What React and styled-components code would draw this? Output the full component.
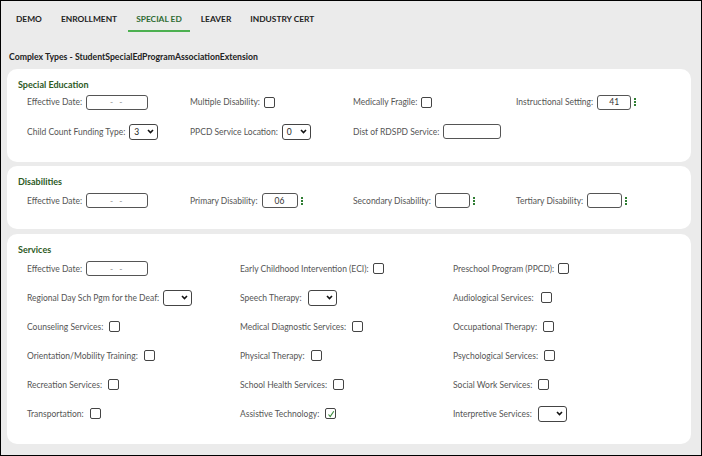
import React from "react";
import styled, { createGlobalStyle } from "styled-components";

const GlobalStyle = createGlobalStyle`
    body {
        margin: 0;
        font-family: "Lato", "Open Sans", sans-serif;
    }
`;

const Frame = styled.div`
    width: 702px;
    height: 456px;
    box-sizing: border-box;
    border: 1px solid #000;
    background: #ebebeb;
    overflow: hidden;
`;

const Tabs = styled.ul`
    display: flex;
    list-style: none;
    margin: 0;
    padding: 0 0 0 7px;
    height: 31px;
`;

const Tab = styled.li`
    padding: 12px 8px 0;
    font-size: 8.4px;
    font-weight: 700;
    line-height: 12px;
    color: ${({ active }) => (active ? "#2f6b33" : "#222")};
    border-bottom: 2px solid ${({ active }) => (active ? "#4cb050" : "transparent")};
    margin-right: 3px;
`;

const Heading = styled.div`
    font-size: 8.7px;
    font-weight: 700;
    color: #222;
    padding: 19px 0 0 8px;
    height: 18px;
`;

const Card = styled.section`
    background: #fff;
    border-radius: 10px;
    margin: 0 10px ${({ after }) => after ?? 4}px 6px;
    padding: 10px 11px ${({ bottom }) => bottom}px;
`;

const Title = styled.div`
    font-size: 9px;
    font-weight: 700;
    color: #2d5a1f;
    line-height: 12px;
    margin-bottom: ${({ gap }) => gap}px;
`;

const Grid = styled.div`
    display: grid;
    grid-template-columns: repeat(${({ cols }) => cols}, ${({ colw }) => colw}px);
    row-gap: ${({ rowGap }) => rowGap}px;
    padding-left: 9px;
`;

const Field = styled.div`
    display: flex;
    align-items: center;
    gap: ${({ gap }) => gap ?? 4}px;
    height: 18px;
    font-size: 8.5px;
    color: #555;
    white-space: nowrap;
`;

const Box = styled.div`
    box-sizing: border-box;
    width: ${({ w }) => w}px;
    height: 15px;
    border: 1px solid #555;
    border-radius: 3px;
    background: #fff;
    display: flex;
    align-items: center;
    justify-content: center;
    font-size: 8.5px;
    color: ${({ dim }) => (dim ? "#999" : "#333")};
    letter-spacing: ${({ dim }) => (dim ? "2px" : "0")};
`;

const Select = styled.div`
    box-sizing: border-box;
    width: 29px;
    height: 16px;
    border: 1px solid #444;
    border-radius: 3px;
    display: flex;
    align-items: center;
    justify-content: space-between;
    padding: 0 3px 0 4px;
    font-size: 8.5px;
    color: #222;
`;

const Check = styled.div`
    box-sizing: border-box;
    width: 11px;
    height: 11px;
    border: 1px solid #444;
    border-radius: 2px;
    display: flex;
    align-items: center;
    justify-content: center;
`;

const Kebab = styled.span`
    display: flex;
    flex-direction: column;
    gap: 1px;
    margin-left: -1px;

    i {
        width: 2px;
        height: 2px;
        background: #2e7d32;
    }
`;

const Chevron = () => (
    <svg width="7" height="5" viewBox="0 0 7 5">
        <path d="M1 1l2.5 2.5L6 1" fill="none" stroke="#111" strokeWidth="1.6" />
    </svg>
);

const Tick = () => (
    <svg width="8" height="8" viewBox="0 0 8 8">
        <path d="M1.5 4.5L3.2 6.5 6.8 1.2" fill="none" stroke="#3a8a3a" strokeWidth="1.1" />
    </svg>
);

const Dots = () => (
    <Kebab>
        <i />
        <i />
        <i />
    </Kebab>
);

const DateField = () => (
    <Field>
        Effective Date:
        <Box w={62} dim>
            - -
        </Box>
    </Field>
);

const CheckField = ({ label, checked, gap }) => (
    <Field gap={gap}>
        {label}
        <Check>{checked && <Tick />}</Check>
    </Field>
);

const SelectField = ({ label, value, gap }) => (
    <Field gap={gap}>
        {label}
        <Select>
            <span>{value}</span>
            <Chevron />
        </Select>
    </Field>
);

const CodeField = ({ label, value, w }) => (
    <Field>
        {label}
        <Box w={w}>{value}</Box>
        <Dots />
    </Field>
);

const tabs = ["DEMO", "ENROLLMENT", "SPECIAL ED", "LEAVER", "INDUSTRY CERT"];

const App = () => (
    <Frame>
        <GlobalStyle />
        <Tabs>
            {tabs.map((t) => (
                <Tab key={t} active={t === "SPECIAL ED"}>
                    {t}
                </Tab>
            ))}
        </Tabs>
        <Heading>Complex Types - StudentSpecialEdProgramAssociationExtension</Heading>

        <Card bottom={21} after={4}>
            <Title gap={2}>Special Education</Title>
            <Grid cols={4} colw={163} rowGap={11.5}>
                <DateField />
                <CheckField label="Multiple Disability:" />
                <CheckField label="Medically Fragile:" />
                <CodeField label="Instructional Setting:" value="41" w={34} />
                <SelectField label="Child Count Funding Type:" value="3" />
                <SelectField label="PPCD Service Location:" value="0" />
                <Field>
                    Dist of RDSPD Service:
                    <Box w={58} />
                </Field>
            </Grid>
        </Card>

        <Card bottom={19} after={5}>
            <Title gap={4}>Disabilities</Title>
            <Grid cols={4} colw={163} rowGap={11}>
                <DateField />
                <CodeField label="Primary Disability:" value="06" w={36} />
                <CodeField label="Secondary Disability:" w={35} />
                <CodeField label="Tertiary Disability:" w={35} />
            </Grid>
        </Card>

        <Card bottom={21}>
            <Title gap={4}>Services</Title>
            <Grid cols={3} colw={213} rowGap={11}>
                <DateField />
                <CheckField label="Early Childhood Intervention (ECI):" />
                <CheckField label="Preschool Program (PPCD):" />
                <SelectField label="Regional Day Sch Pgm for the Deaf:" />
                <SelectField label="Speech Therapy:" gap={6} />
                <CheckField label="Audiological Services:" gap={7} />
                <CheckField label="Counseling Services:" gap={6} />
                <CheckField label="Medical Diagnostic Services:" gap={6} />
                <CheckField label="Occupational Therapy:" gap={6} />
                <CheckField label="Orientation/Mobility Training:" gap={6} />
                <CheckField label="Physical Therapy:" gap={6} />
                <CheckField label="Psychological Services:" gap={6} />
                <CheckField label="Recreation Services:" gap={6} />
                <CheckField label="School Health Services:" gap={6} />
                <CheckField label="Social Work Services:" gap={6} />
                <CheckField label="Transportation:" gap={6} />
                <CheckField label="Assistive Technology:" gap={6} checked />
                <SelectField label="Interpretive Services:" gap={6} />
            </Grid>
        </Card>
    </Frame>
);

export default App;
